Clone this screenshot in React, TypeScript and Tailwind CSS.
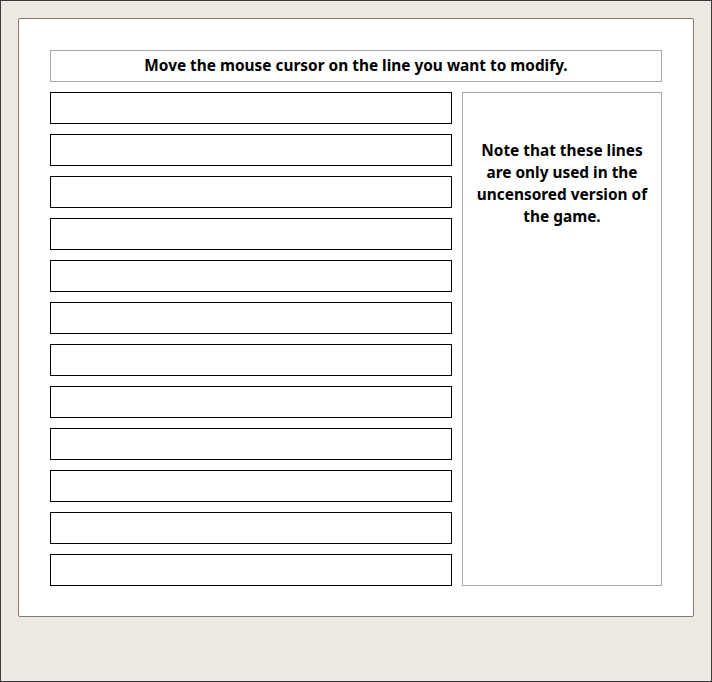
export default function App() {
  const lines = Array.from({ length: 12 }, (_, i) => i)

  return (
    <div
      className="w-[712px] h-[682px] border border-[#3a3a3a] bg-[#ece9e2] pt-[17px] px-[17px]"
      style={{ fontFamily: '"Noto Sans", "DejaVu Sans", sans-serif' }}
    >
      <div className="w-[676px] h-[599px] rounded-[2px] border border-[#857a6c] bg-white p-[31px] pb-[30px]">
        {/* Header */}
        <div className="h-[32px] border border-[#a9a9a9] flex items-center justify-center text-[15.4px] font-bold text-black">
          Move the mouse cursor on the line you want to modify.
        </div>

        <div className="mt-[10px] flex gap-[10px]">
          {/* Line slots */}
          <div className="w-[402px] flex flex-col gap-[10px]">
            {lines.map((i) => (
              <div key={i} className="h-[32px] border border-black bg-white" />
            ))}
          </div>

          {/* Note */}
          <div className="w-[200px] h-[494px] border border-[#a9a9a9] pt-[47px] px-2 text-center text-[15.4px] leading-[22px] font-bold text-black">
            Note that these lines are only used in the uncensored version of the game.
          </div>
        </div>
      </div>
    </div>
  )
}
